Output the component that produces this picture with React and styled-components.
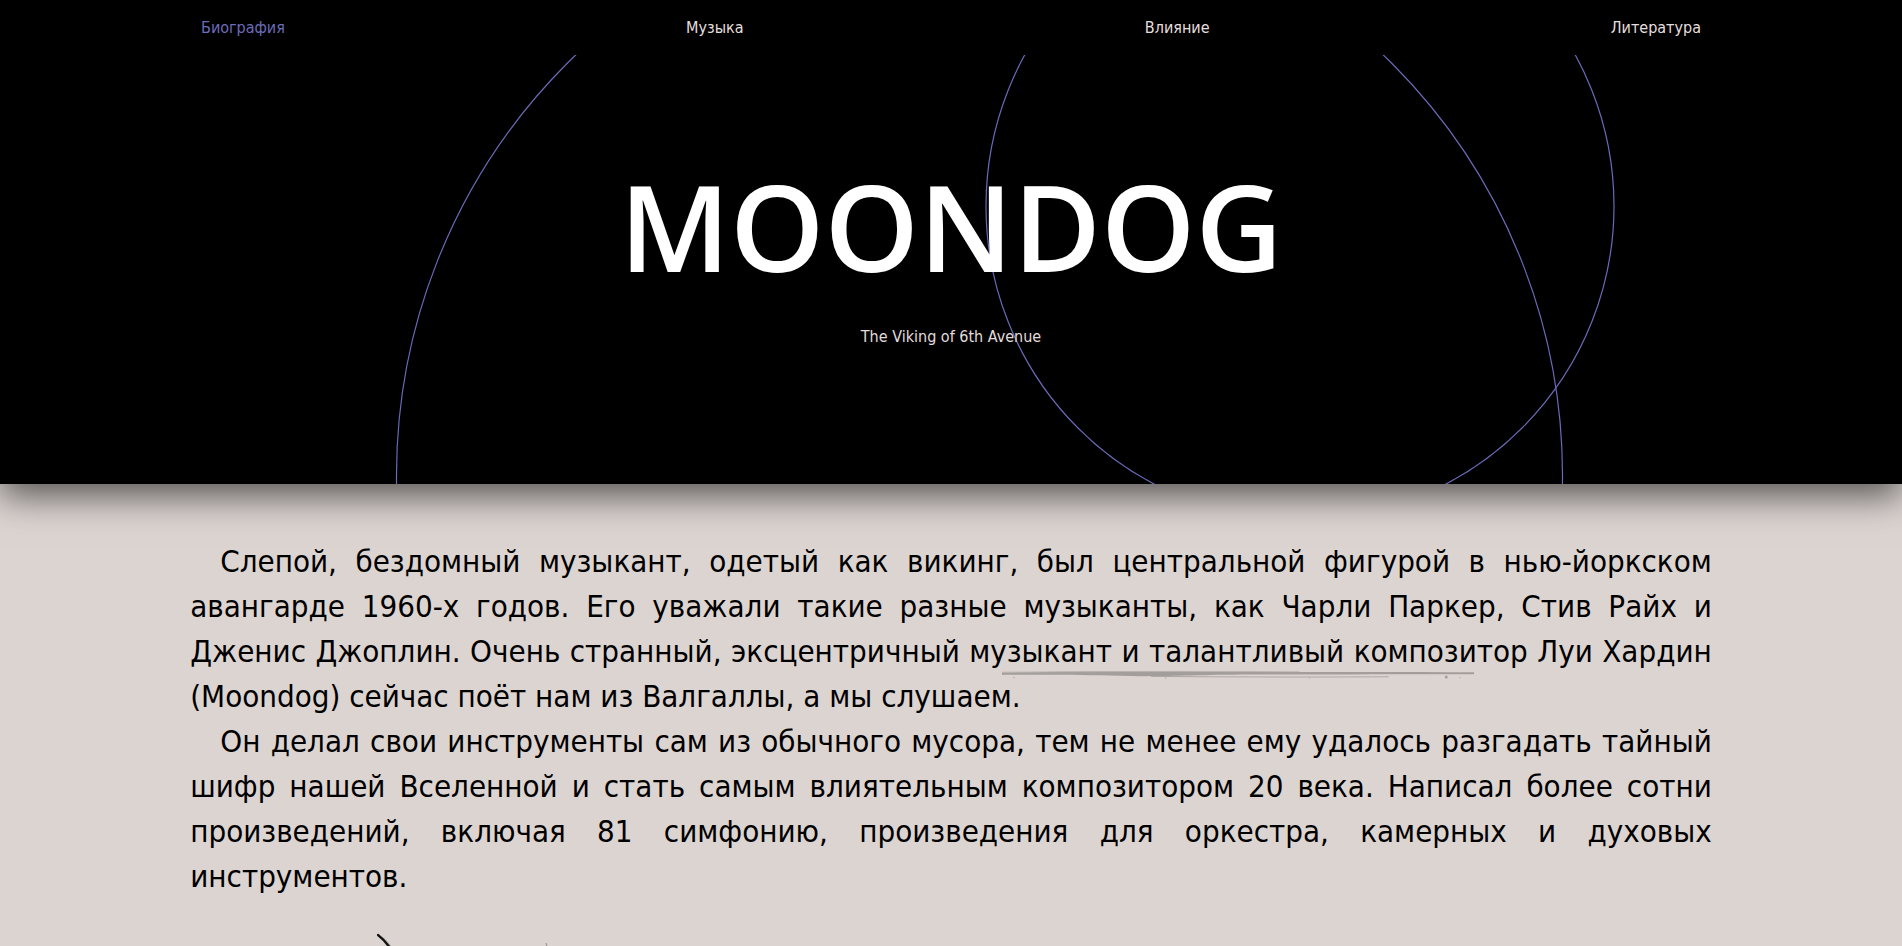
import React from "react";
import styled, { createGlobalStyle } from "styled-components";

const GlobalStyle = createGlobalStyle`
  html, body { margin: 0; padding: 0; }
  body {
    background: #dcd4d1;
    font-family: "DejaVu Sans Condensed", "DejaVu Sans", sans-serif;
    font-stretch: semi-condensed;
    overflow-x: hidden;
  }
`;

const Header = styled.header`
  position: relative;
  z-index: 1;
  background: #000;
  box-shadow: 0 12px 34px rgba(0, 0, 0, 0.6);
`;

const Nav = styled.nav`
  position: relative;
  z-index: 2;
  height: 55px;
  background: #000;
`;

const NavList = styled.ul`
  width: 1500px;
  margin: 0 auto;
  padding: 18px 0 0;
  list-style: none;
  display: flex;
  justify-content: space-between;
`;

const NavLink = styled.a`
  font-family: "DejaVu Sans Condensed", "DejaVu Sans", sans-serif;
  font-size: 16px;
  line-height: 1;
  text-decoration: none;
  color: ${(p) => (p.$active ? "#6c6cb9" : "#e4dfdf")};
  cursor: pointer;
`;

const Hero = styled.div`
  position: relative;
  height: 429px;
  overflow: hidden;
  display: flex;
  flex-direction: column;
  align-items: center;
`;

const Orbits = styled.svg`
  position: absolute;
  left: 0;
  top: 0;
  width: 100%;
  height: 100%;
  pointer-events: none;
`;

const Title = styled.h1`
  position: relative;
  margin: 111px 0 0;
  font-family: "Open Sans", "Noto Sans", sans-serif;
  font-stretch: normal;
  font-weight: 600;
  font-size: 120px;
  line-height: 120px;
  color: #fff;
  letter-spacing: 0;
`;

const Subtitle = styled.p`
  position: relative;
  margin: 43px 0 0;
  font-family: "DejaVu Sans Condensed", "DejaVu Sans", sans-serif;
  font-size: 16px;
  line-height: 1;
  color: #e2dcdc;
`;

const Main = styled.main`
  width: 80%;
  margin: 0 auto;
  padding-top: 55px;
`;

const Paragraph = styled.p`
  margin: 0;
  font-size: 31px;
  line-height: 45px;
  text-align: justify;
  text-indent: 30px;
  color: #000;
`;

const Marked = styled.span`
  position: relative;
  white-space: nowrap;
`;

const Brush = styled.svg`
  position: absolute;
  left: 33px;
  bottom: -11px;
  width: 472px;
  height: 11px;
  pointer-events: none;
`;

const Sketch = styled.svg`
  display: block;
  margin: 24px 0 0 130px;
  width: 600px;
  height: 220px;
`;

const links = ["Биография", "Музыка", "Влияние", "Литература"];

export default function App() {
  return (
    <>
      <GlobalStyle />
      <Header>
        <Nav>
          <NavList>
            {links.map((l, i) => (
              <li key={l}>
                <NavLink $active={i === 0}>{l}</NavLink>
              </li>
            ))}
          </NavList>
        </Nav>
        <Hero>
          <Orbits viewBox="0 0 1902 429" preserveAspectRatio="none">
            <circle cx="979.5" cy="420.5" r="583" fill="none" stroke="#6a6ab8" strokeWidth="1.2" />
            <circle cx="1300" cy="151" r="314" fill="none" stroke="#6a6ab8" strokeWidth="1.2" />
          </Orbits>
          <Title>MOONDOG</Title>
          <Subtitle>The Viking of 6th Avenue</Subtitle>
        </Hero>
      </Header>
      <Main>
        <Paragraph>
          Слепой, бездомный музыкант, одетый как викинг, был центральной фигурой в нью-йоркском
          авангарде 1960-х годов. Его уважали такие разные музыканты, как Чарли Паркер, Стив Райх и
          Дженис Джоплин. Очень странный, эксцентричный{" "}
          <Marked>
            музыкант и талантливый композитор
            <Brush viewBox="0 0 476 11" preserveAspectRatio="none">
              <path d="M0 3.6 C60 2.4 140 2.2 230 2.8 C320 3.2 400 2.6 476 3.3 L476 5.2 C400 5 330 5.4 250 5.6 C200 5.9 170 7.4 140 7.2 C110 7 90 5.8 60 5.8 C30 5.8 10 5.8 0 6 Z" fill="#a39e9b" />
              <path d="M150 7.4 C230 8 300 8.2 390 7.8" stroke="#aca7a4" strokeWidth="1" fill="none" />
              <path d="M0 3.2 C100 2.3 200 2.2 300 2.7" stroke="#b6b1ae" strokeWidth="0.8" fill="none" />
              <circle cx="12" cy="8.5" r="0.8" fill="#b0aba8" />
              <circle cx="165" cy="9" r="0.7" fill="#b0aba8" />
              <circle cx="310" cy="9" r="0.7" fill="#b0aba8" />
              <circle cx="448" cy="8" r="1.5" fill="#a39e9b" />
              <circle cx="462" cy="8.6" r="0.7" fill="#b0aba8" />
            </Brush>
          </Marked>{" "}
          Луи Хардин (Moondog) сейчас поёт нам из Валгаллы, а мы слушаем.
        </Paragraph>
        <Paragraph>
          Он делал свои инструменты сам из обычного мусора, тем не менее ему удалось разгадать тайный
          шифр нашей Вселенной и стать самым влиятельным композитором 20 века. Написал более сотни
          произведений, включая 81 симфонию, произведения для оркестра, камерных и духовых
          инструментов.
        </Paragraph>
        <Sketch viewBox="0 0 600 220">
          <path d="M58 12 C66 18 72 26 78 40" stroke="#111" strokeWidth="2.2" fill="none" strokeLinecap="round" />
          <path d="M62 14 C70 20 76 30 80 44" stroke="#555" strokeWidth="1" fill="none" opacity="0.5" />
          <path d="M226 20 C228 26 229 34 229 44" stroke="#777" strokeWidth="0.8" fill="none" />
        </Sketch>
      </Main>
    </>
  );
}
